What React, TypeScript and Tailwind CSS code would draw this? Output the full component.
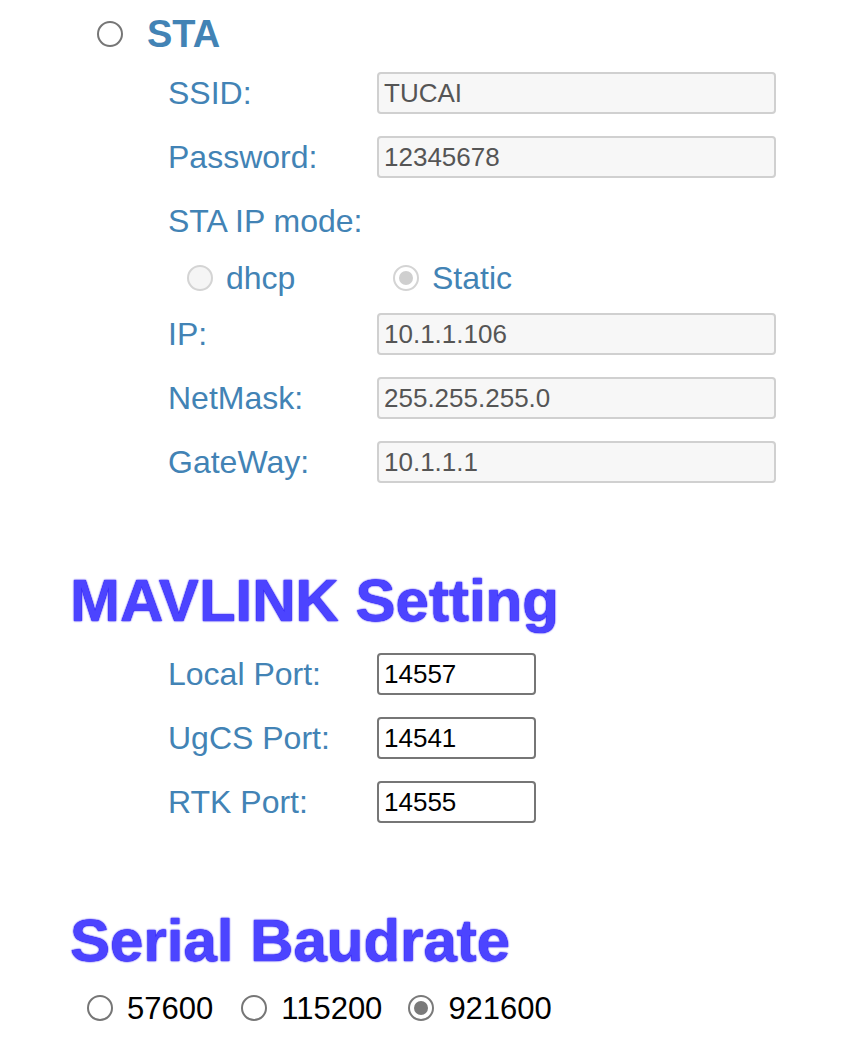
import React from "react";

const labelCls = "w-[209px] shrink-0 text-[32px] leading-none text-[#4283b5]";
const headCls =
  "ml-[70px] text-[60px] font-bold leading-none text-[#4c44ff] [text-shadow:0_0_1px_#1500f0,0_0_2px_#1500f0]";

function Radio({ state }: { state: "off" | "on" | "disabled" | "disabledOn" }) {
  if (state === "disabled") {
    return <span className="h-[26px] w-[26px] shrink-0 rounded-full border-2 border-[#d4d4d4] bg-[#f5f5f5]" />;
  }
  if (state === "disabledOn") {
    return (
      <span className="flex h-[26px] w-[26px] shrink-0 items-center justify-center rounded-full border-2 border-[#d4d4d4] bg-white">
        <span className="h-[14px] w-[14px] rounded-full bg-[#cfcfcf]" />
      </span>
    );
  }
  if (state === "on") {
    return (
      <span className="flex h-[26px] w-[26px] shrink-0 items-center justify-center rounded-full border-2 border-[#7a7a7a] bg-white">
        <span className="h-[14px] w-[14px] rounded-full bg-[#7a7a7a]" />
      </span>
    );
  }
  return <span className="h-[26px] w-[26px] shrink-0 rounded-full border-2 border-[#767676] bg-white" />;
}

function StaRow({ label, value, className = "" }: { label: string; value: string; className?: string }) {
  return (
    <div className={"flex h-[42px] items-center pl-[168px] " + className}>
      <span className={labelCls}>{label}</span>
      <div className="flex h-[42px] w-[399px] items-center rounded-[4px] border-2 border-[#d0d0d0] bg-[#f7f7f7] pl-[5px] text-[26px] text-[#555]">
        {value}
      </div>
    </div>
  );
}

function PortRow({ label, value, className = "" }: { label: string; value: string; className?: string }) {
  return (
    <div className={"flex h-[42px] items-center pl-[168px] " + className}>
      <span className={labelCls}>{label}</span>
      <div className="flex h-[42px] w-[159px] items-center rounded-[4px] border-2 border-[#767676] bg-white pl-[5px] text-[26px] text-black">
        {value}
      </div>
    </div>
  );
}

export default function App() {
  return (
    <div className="min-h-screen bg-white pt-[13px] font-['Liberation_Sans',Arial,sans-serif]">
      <div className="flex h-[42px] items-center pl-[97px]">
        <Radio state="off" />
        <span className="ml-[24px] text-[38px] font-bold leading-none text-[#4283b5]">STA</span>
      </div>

      <StaRow label="SSID:" value="TUCAI" className="mt-[17px]" />
      <StaRow label="Password:" value="12345678" className="mt-[22px]" />
      <div className="mt-[22px] flex h-[42px] items-center pl-[168px]">
        <span className="text-[32px] leading-none text-[#4283b5]">STA IP mode:</span>
      </div>
      <div className="mt-[15px] flex h-[42px] items-center pl-[187px]">
        <Radio state="disabled" />
        <span className="ml-[13px] w-[167px] text-[32px] leading-none text-[#4283b5]">dhcp</span>
        <Radio state="disabledOn" />
        <span className="ml-[13px] text-[32px] leading-none text-[#4283b5]">Static</span>
      </div>
      <StaRow label="IP:" value="10.1.1.106" className="mt-[14px]" />
      <StaRow label="NetMask:" value="255.255.255.0" className="mt-[22px]" />
      <StaRow label="GateWay:" value="10.1.1.1" className="mt-[22px]" />

      <h2 className={headCls + " mt-[88px]"}>MAVLINK Setting</h2>
      <PortRow label="Local Port:" value="14557" className="mt-[22px]" />
      <PortRow label="UgCS Port:" value="14541" className="mt-[22px]" />
      <PortRow label="RTK Port:" value="14555" className="mt-[22px]" />

      <h2 className={headCls + " mt-[88px]"}>Serial Baudrate</h2>
      <div className="mt-[16px] flex h-[42px] items-center pl-[87px] text-[31px] leading-none text-black">
        <Radio state="off" />
        <span className="ml-[14px] mr-[28px]">57600</span>
        <Radio state="off" />
        <span className="ml-[14px] mr-[26px]">115200</span>
        <Radio state="on" />
        <span className="ml-[14px]">921600</span>
      </div>
    </div>
  );
}
